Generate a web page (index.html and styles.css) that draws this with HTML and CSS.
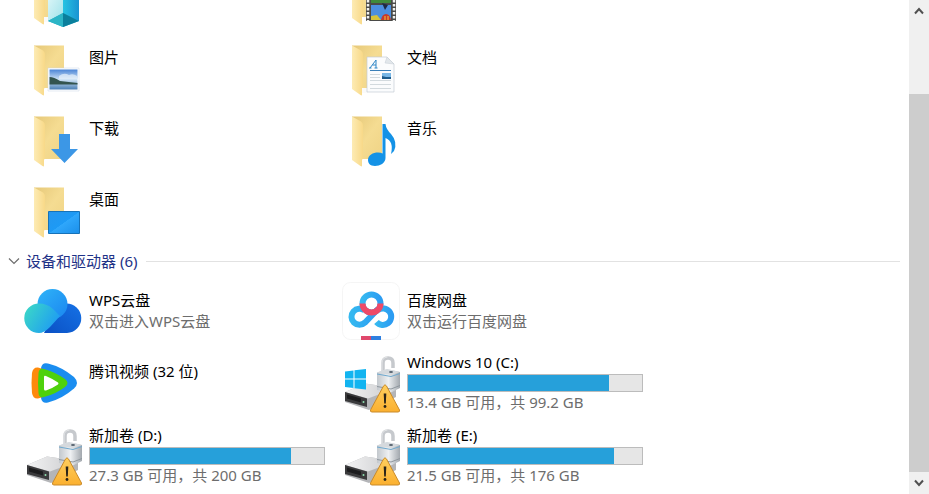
FILE: index.html
```html
<!DOCTYPE html>
<html lang="zh-CN">
<head>
    <meta charset="UTF-8">
    <meta name="viewport" content="width=device-width, initial-scale=1.0">
    <title>此电脑</title>
    <link rel="stylesheet" href="styles.css">
</head>
<body>

<!-- 公用图形 -->
<svg class="defs" width="0" height="0" aria-hidden="true">
    <defs>
        <linearGradient id="folder-back" x1="0" y1="0" x2="1" y2="1">
            <stop offset="0" stop-color="#e6c878"/>
            <stop offset="0.5" stop-color="#f5dc92"/>
            <stop offset="1" stop-color="#efd385"/>
        </linearGradient>
        <linearGradient id="folder-flap" x1="0" y1="0" x2="1" y2="0">
            <stop offset="0" stop-color="#fdebb4"/>
            <stop offset="1" stop-color="#f8d988"/>
        </linearGradient>
        <linearGradient id="cube-left" x1="0" y1="0" x2="1" y2="1">
            <stop offset="0" stop-color="#dff7f8"/>
            <stop offset="1" stop-color="#9fe2ea"/>
        </linearGradient>
        <linearGradient id="cube-right" x1="0" y1="0" x2="1" y2="0">
            <stop offset="0" stop-color="#25c3e2"/>
            <stop offset="1" stop-color="#1a93d2"/>
        </linearGradient>
        <linearGradient id="sky" x1="0" y1="0" x2="0" y2="1">
            <stop offset="0" stop-color="#4a84d6"/>
            <stop offset="0.5" stop-color="#cfe3f5"/>
            <stop offset="1" stop-color="#4a7fb4"/>
        </linearGradient>
        <linearGradient id="screen" x1="0" y1="0" x2="1" y2="1">
            <stop offset="0" stop-color="#2596ee"/>
            <stop offset="0.5" stop-color="#1d9af5"/>
            <stop offset="0.51" stop-color="#2fa7fb"/>
            <stop offset="1" stop-color="#1b8fea"/>
        </linearGradient>
        <linearGradient id="cloud-left" x1="0" y1="0" x2="1" y2="0.5">
            <stop offset="0" stop-color="#3ddcc4"/>
            <stop offset="1" stop-color="#1f9df2"/>
        </linearGradient>
        <linearGradient id="cloud-top" x1="0" y1="0" x2="1" y2="1">
            <stop offset="0" stop-color="#2fb4f8"/>
            <stop offset="1" stop-color="#1a86f0"/>
        </linearGradient>
        <linearGradient id="cloud-right" x1="1" y1="0" x2="0" y2="1">
            <stop offset="0" stop-color="#1672e6"/>
            <stop offset="1" stop-color="#0a50c4"/>
        </linearGradient>
        <linearGradient id="ring" x1="0" y1="0" x2="1" y2="0">
            <stop offset="0" stop-color="#35b8f0"/>
            <stop offset="1" stop-color="#2b9cf2"/>
        </linearGradient>
        <linearGradient id="metal" x1="0" y1="0" x2="1" y2="0">
            <stop offset="0" stop-color="#c3c8cd"/>
            <stop offset="0.5" stop-color="#eef0f2"/>
            <stop offset="1" stop-color="#a2a8ae"/>
        </linearGradient>
        <linearGradient id="case" x1="0" y1="0" x2="1" y2="0">
            <stop offset="0" stop-color="#f3f3f4"/>
            <stop offset="1" stop-color="#c9cacc"/>
        </linearGradient>
        <linearGradient id="warn" x1="0" y1="0" x2="0" y2="1">
            <stop offset="0" stop-color="#ffcf5e"/>
            <stop offset="1" stop-color="#fbb030"/>
        </linearGradient>

        <symbol id="folder" viewBox="0 0 58 58">
            <path d="M10 4.500H40V47H10z" fill="url(#folder-back)"/>
            <path d="M10 4.500L19 9.500Q21 11 21 13V46L20 48V53.500Q20 55 18.500 54L10 48z" fill="url(#folder-flap)"/>
        </symbol>

        <symbol id="drive" viewBox="0 0 58 58">
            <path d="M3 37L23 28.500L54 33V42L27 55L3 47z" fill="#b4b5b8"/>
            <path d="M3 37L23 28.500L54 33L26 43.500z" fill="url(#case)"/>
            <path d="M3 37L25 43.500V52L3 46z" fill="#3a3a3c"/>
            <path d="M5 39.500L19 43.500V47.500L5 43.500z" fill="#1c1c1e"/>
            <circle cx="21.500" cy="47" r="1" fill="#8fe0b0"/>
            <path d="M41 18V8Q41 3 46 3Q51 3 51 8V13" fill="none" stroke="#c6c9cd" stroke-width="3.500"/>
            <path d="M40 18V8Q40 2.500 45.500 2" fill="none" stroke="#e4e6e8" stroke-width="1"/>
            <path d="M35 17.500L45 14L58 17V33L49 37.500L35 35z" fill="url(#metal)"/>
            <path d="M35 17.500L45 14L58 17L49 20z" fill="#d5d9dd"/>
            <path d="M35 19L49 21.500L58 18.500" fill="none" stroke="#6fa9cf" stroke-width="1"/>
            <path d="M35 31.500L49 34L58 30.500" fill="none" stroke="#8e969d" stroke-width="1"/>
            <ellipse cx="49" cy="17" rx="2" ry="1" fill="#55626e"/>
            <path d="M41.500 31Q43 28.500 44.500 31L57.500 55Q58 57 56 57H30Q28 57 28.500 55z" fill="url(#warn)" stroke="#c98a2a" stroke-width="1"/>
            <path d="M41.700 38.500H44.300L43.800 48.500H42.200z" fill="#2b2418"/>
            <circle cx="43" cy="51.500" r="1.400" fill="#2b2418"/>
        </symbol>
    </defs>
</svg>

<div class="window">
    <main class="content">
        <section class="grid folders">
            <div class="tile">
                <svg class="icon" viewBox="0 0 58 58" role="img" aria-label="3D 对象">
                    <use href="#folder"/>
                    <path d="M20 47H26V52H20z" fill="#fafafa"/>
                    <path d="M24 24L39 18L55 24V51L39 57L24 51z" fill="#1fb0cf"/>
                    <path d="M24 24L39 29V43L24 51z" fill="url(#cube-left)"/>
                    <path d="M39 29L55 24V51L39 43z" fill="url(#cube-right)"/>
                    <path d="M39 43L55 51L39 57z" fill="#0b7f9c"/>
                    <path d="M24 51L39 43V57z" fill="#2cb5c6"/>
                </svg>
            </div>
            <div class="tile">
                <svg class="icon" viewBox="0 0 58 58" role="img" aria-label="视频">
                    <use href="#folder"/>
                    <path d="M20 47H26V51H20z" fill="#fff"/>
                    <path d="M24 14H54V51H24z" fill="#4a4a48"/>
                    <path d="M26 14V51M52 14V51" stroke="#f2f2f0" stroke-width="2.500" stroke-dasharray="2.500 1.500"/>
                    <path d="M29 16H49V33H29z" fill="#c4559b"/>
                    <path d="M29 28L36 26L40 30L49 27V33H29z" fill="#3f8b3a"/>
                    <path d="M29 35H49V50H29z" fill="#4b8fe0"/>
                    <path d="M40 33L46 35L43 40z" fill="#1d2a45"/>
                    <path d="M29 46L35 45L39 50H29z" fill="#d6c43c"/>
                    <path d="M39 50Q40 44 44 44Q48 44 49 50z" fill="#c8392b"/>
                    <path d="M43 46V50M46 46V50" stroke="#f5c63c" stroke-width="1"/>
                </svg>
            </div>
            <div class="tile">
                <svg class="icon" viewBox="0 0 58 58" aria-hidden="true">
                    <use href="#folder"/>
                    <path d="M24 27H55V50H24z" fill="#fff" stroke="#c9d6e4" stroke-width="0.500"/>
                    <path d="M25.500 28.500H53.500V48.500H25.500z" fill="url(#sky)"/>
                    <path d="M35 35Q40 31 45 34Q49 32 53 35V38H35z" fill="#e8f2fb" opacity="0.700"/>
                    <path d="M25.500 36Q30 36 36 40L53.500 42V43.500H25.500z" fill="#33544e"/>
                </svg>
                <div class="info"><div class="name">图片</div></div>
            </div>
            <div class="tile">
                <svg class="icon" viewBox="0 0 58 58" aria-hidden="true">
                    <use href="#folder"/>
                    <path d="M20 47H26V52H20z" fill="#fafafa"/>
                    <path d="M25 16H45L52 23V51H25z" fill="#fbfcfd" stroke="#c4ccd4" stroke-width="0.700"/>
                    <path d="M45 16L43 22L52 23z" fill="#e2e7eb" stroke="#c4ccd4" stroke-width="0.500"/>
                    <path d="M28 27L34 19V27M30.500 24H34M27 27H29.500M32.500 27H35.500" fill="none" stroke="#2f86c6" stroke-width="1"/>
                    <path d="M28 29.500H49" stroke="#3a7fb8" stroke-width="1"/>
                    <path d="M28 33.500H38M28 36.500H38M28 39.500H49M28 43.500H49M28 47.500H49" stroke="#c9d0d6" stroke-width="0.800"/>
                    <path d="M40 32H49V38H40z" fill="#79b7e6"/>
                    <path d="M40 35L44 36L49 36V38H40z" fill="#1e5c8c"/>
                </svg>
                <div class="info"><div class="name">文档</div></div>
            </div>
            <div class="tile">
                <svg class="icon" viewBox="0 0 58 58" aria-hidden="true">
                    <use href="#folder"/>
                    <path d="M35 22H46V37H54L40.500 51L27 37H35z" fill="#3c97e6"/>
                </svg>
                <div class="info"><div class="name">下载</div></div>
            </div>
            <div class="tile">
                <svg class="icon" viewBox="0 0 58 58" aria-hidden="true">
                    <use href="#folder"/>
                    <path d="M40.500 12H43.500Q44 17 49 22Q56 30 52 39L49 42Q52 29 43.500 26V46C43.500 51 38 54 33 54C28 54 26 51 26 48C26 43 31 40.500 36 40.500Q39 40.500 40.500 41.500z" fill="#1492e6"/>
                </svg>
                <div class="info"><div class="name">音乐</div></div>
            </div>
            <div class="tile">
                <svg class="icon" viewBox="0 0 58 58" aria-hidden="true">
                    <use href="#folder"/>
                    <path d="M24.500 28.500H55.500V50.500H24.500z" fill="url(#screen)" stroke="#1672b8" stroke-width="1"/>
                </svg>
                <div class="info"><div class="name">桌面</div></div>
            </div>
        </section>

        <h2 class="group">
            <button type="button" class="group-btn" aria-expanded="true">
                <svg class="chevron" viewBox="0 0 12 8" aria-hidden="true"><path d="M1 1.500L6 6.500L11 1.500"/></svg>
                设备和驱动器 (6)
            </button>
        </h2>

        <section class="grid devices">
            <div class="tile">
                <svg class="icon" viewBox="0 0 58 58" aria-hidden="true">
                    <path d="M42 21.500A14.500 14.500 0 0 1 43 51H20L30 31z" fill="url(#cloud-right)"/>
                    <circle cx="28.500" cy="22" r="15" fill="url(#cloud-top)"/>
                    <path d="M15 21.500Q23 21.500 29 27L36 34L26 45Q20 51 15 51A14.750 14.750 0 0 1 15 21.500z" fill="url(#cloud-left)"/>
                </svg>
                <div class="info">
                    <div class="name">WPS云盘</div>
                    <div class="note">双击进入WPS云盘</div>
                </div>
            </div>
            <div class="tile">
                <svg class="icon" viewBox="0 0 58 58" aria-hidden="true">
                    <rect x="0.500" y="0.500" width="57" height="57" rx="8" fill="#fff" stroke="#f5f5f5"/>
                    <g fill="none" stroke="url(#ring)" stroke-width="6">
                        <path d="M36 27L23 40.500A8 8 0 1 1 22.500 28.500"/>
                        <path d="M36 28A8.300 8.300 0 1 1 34.500 40"/>
                        <circle cx="29.500" cy="21.500" r="9"/>
                    </g>
                    <path d="M20.500 21.500A9 9 0 0 0 38.500 21.500" fill="none" stroke="#ee4a68" stroke-width="6"/>
                    <path d="M19 54H29V58H19z" fill="#e0486c"/>
                    <path d="M29 54H39V58H29z" fill="#2f80e0"/>
                </svg>
                <div class="info">
                    <div class="name">百度网盘</div>
                    <div class="note">双击运行百度网盘</div>
                </div>
            </div>
            <div class="tile single">
                <svg class="icon" viewBox="0 0 58 58" aria-hidden="true">
                    <path d="M17 13Q18 7 24 8.500Q38 12 50 22Q56 28 50 33.500Q38 44 24 47.500Q18 49 17 43z" fill="#1a8df0"/>
                    <path d="M8 18Q9 12 14 12.500L19 14V42L14 43.500Q9 44 8 38Q7 28 8 18z" fill="#ff8a0c"/>
                    <path d="M14.500 18Q15 12.500 20 14Q31 17 41 24Q46 28 41 32Q31 39.500 20 42Q15 43.500 14.500 38Q13.500 28 14.500 18z" fill="#4ed10c"/>
                    <path d="M20 22Q20 20 22 21Q29 24 34 27.500Q35 28.500 34 29.500Q29 33 22 35.500Q20 36 20 34z" fill="#fff"/>
                </svg>
                <div class="info"><div class="name">腾讯视频 (32 位)</div></div>
            </div>
            <div class="tile drive">
                <svg class="icon" viewBox="0 0 58 58" aria-hidden="true">
                    <use href="#drive"/>
                    <path d="M3 16.500L11.500 15.500V23.500H3zM12.500 15.300L24 14V23.500H12.500zM3 24.500H11.500V33L3 32zM12.500 24.500H24V34.500L12.500 33.200z" fill="#12b4f0"/>
                </svg>
                <div class="info">
                    <div class="name">Windows 10 (C:)</div>
                    <div class="bar"><div class="used" style="width: 86%"></div></div>
                    <div class="note">13.4 GB 可用，共 99.2 GB</div>
                </div>
            </div>
            <div class="tile drive">
                <svg class="icon" viewBox="0 0 58 58" aria-hidden="true"><use href="#drive"/></svg>
                <div class="info">
                    <div class="name">新加卷 (D:)</div>
                    <div class="bar"><div class="used" style="width: 86%"></div></div>
                    <div class="note">27.3 GB 可用，共 200 GB</div>
                </div>
            </div>
            <div class="tile drive">
                <svg class="icon" viewBox="0 0 58 58" aria-hidden="true"><use href="#drive"/></svg>
                <div class="info">
                    <div class="name">新加卷 (E:)</div>
                    <div class="bar"><div class="used" style="width: 88%"></div></div>
                    <div class="note">21.5 GB 可用，共 176 GB</div>
                </div>
            </div>
        </section>
    </main>

    <div class="scrollbar">
        <button type="button" class="arrow" aria-label="向上滚动">
            <svg viewBox="0 0 10 8" aria-hidden="true"><path d="M1 6.500L5 2L9 6.500"/></svg>
        </button>
        <div class="track">
            <div class="thumb"></div>
        </div>
        <button type="button" class="arrow" aria-label="向下滚动">
            <svg viewBox="0 0 10 8" aria-hidden="true"><path d="M1 1.500L5 6L9 1.500"/></svg>
        </button>
    </div>
</div>

</body>
</html>
```
FILE: styles.css
```css
body {
    margin: 0;
    font-family: "Noto Sans", "Noto Sans CJK SC", sans-serif;
    font-size: 15px;
    line-height: 21px;
    color: #000;
    background-color: #fff;
}

button {
    padding: 0;
    border: none;
    background: none;
    font: inherit;
    color: inherit;
    cursor: pointer;
}

.defs {
    position: absolute;
}

.window {
    display: flex;
    height: 100vh;
    overflow: hidden;
}

.content {
    flex: 1;
    min-width: 0;
}

/* 图标列表 */
.grid {
    display: grid;
    grid-template-columns: repeat(auto-fill, 318px);
    row-gap: 1px;
    padding-left: 24px;
}

.folders {
    grid-auto-rows: 70px;
    margin-top: -36px; /* 列表已向下滚动，首行只露出一部分 */
}

.devices {
    grid-auto-rows: 72px;
}

.tile {
    display: flex;
    align-items: center;
    gap: 7px;
}

.icon {
    flex: none;
    width: 58px;
    height: 58px;
}

.info {
    width: 236px;
    white-space: nowrap;
}

.folders .info,
.single .info {
    padding-bottom: 26px;
}

.drive .info {
    padding-bottom: 3px;
}

.drive .name {
    margin-bottom: 1px;
}

.note {
    color: #6d6d6d;
}

/* 磁盘容量条 */
.bar {
    height: 16px;
    border: 1px solid #bcbcbc;
    background-color: #e6e6e6;
}

.used {
    height: 100%;
    background-color: #26a0da;
}

/* 分组标题 */
.group {
    display: flex;
    align-items: center;
    gap: 9px;
    height: 28px;
    margin: 0;
    padding: 0 9px 0 8px;
    font-size: 15px;
    font-weight: normal;
    color: #1e3287;
}

.group::after {
    content: "";
    flex: 1;
    height: 1px;
    background-color: #e2e2e2;
}

.group-btn {
    display: flex;
    align-items: center;
    gap: 6px;
}

.chevron {
    width: 12px;
    height: 8px;
}

.chevron path {
    fill: none;
    stroke: #6d6d6d;
    stroke-width: 1.2;
}

/* 滚动条 */
.scrollbar {
    display: flex;
    flex-direction: column;
    width: 20px;
    background-color: #f0f0f0;
}

.arrow {
    display: flex;
    align-items: center;
    justify-content: center;
    height: 22px;
}

.arrow svg {
    width: 10px;
    height: 8px;
}

.arrow path {
    fill: none;
    stroke: #505050;
    stroke-width: 2;
}

.track {
    display: flex;
    flex: 1;
    flex-direction: column;
    justify-content: flex-end;
}

.thumb {
    height: 84%;
    background-color: #cdcdcd;
}
```
